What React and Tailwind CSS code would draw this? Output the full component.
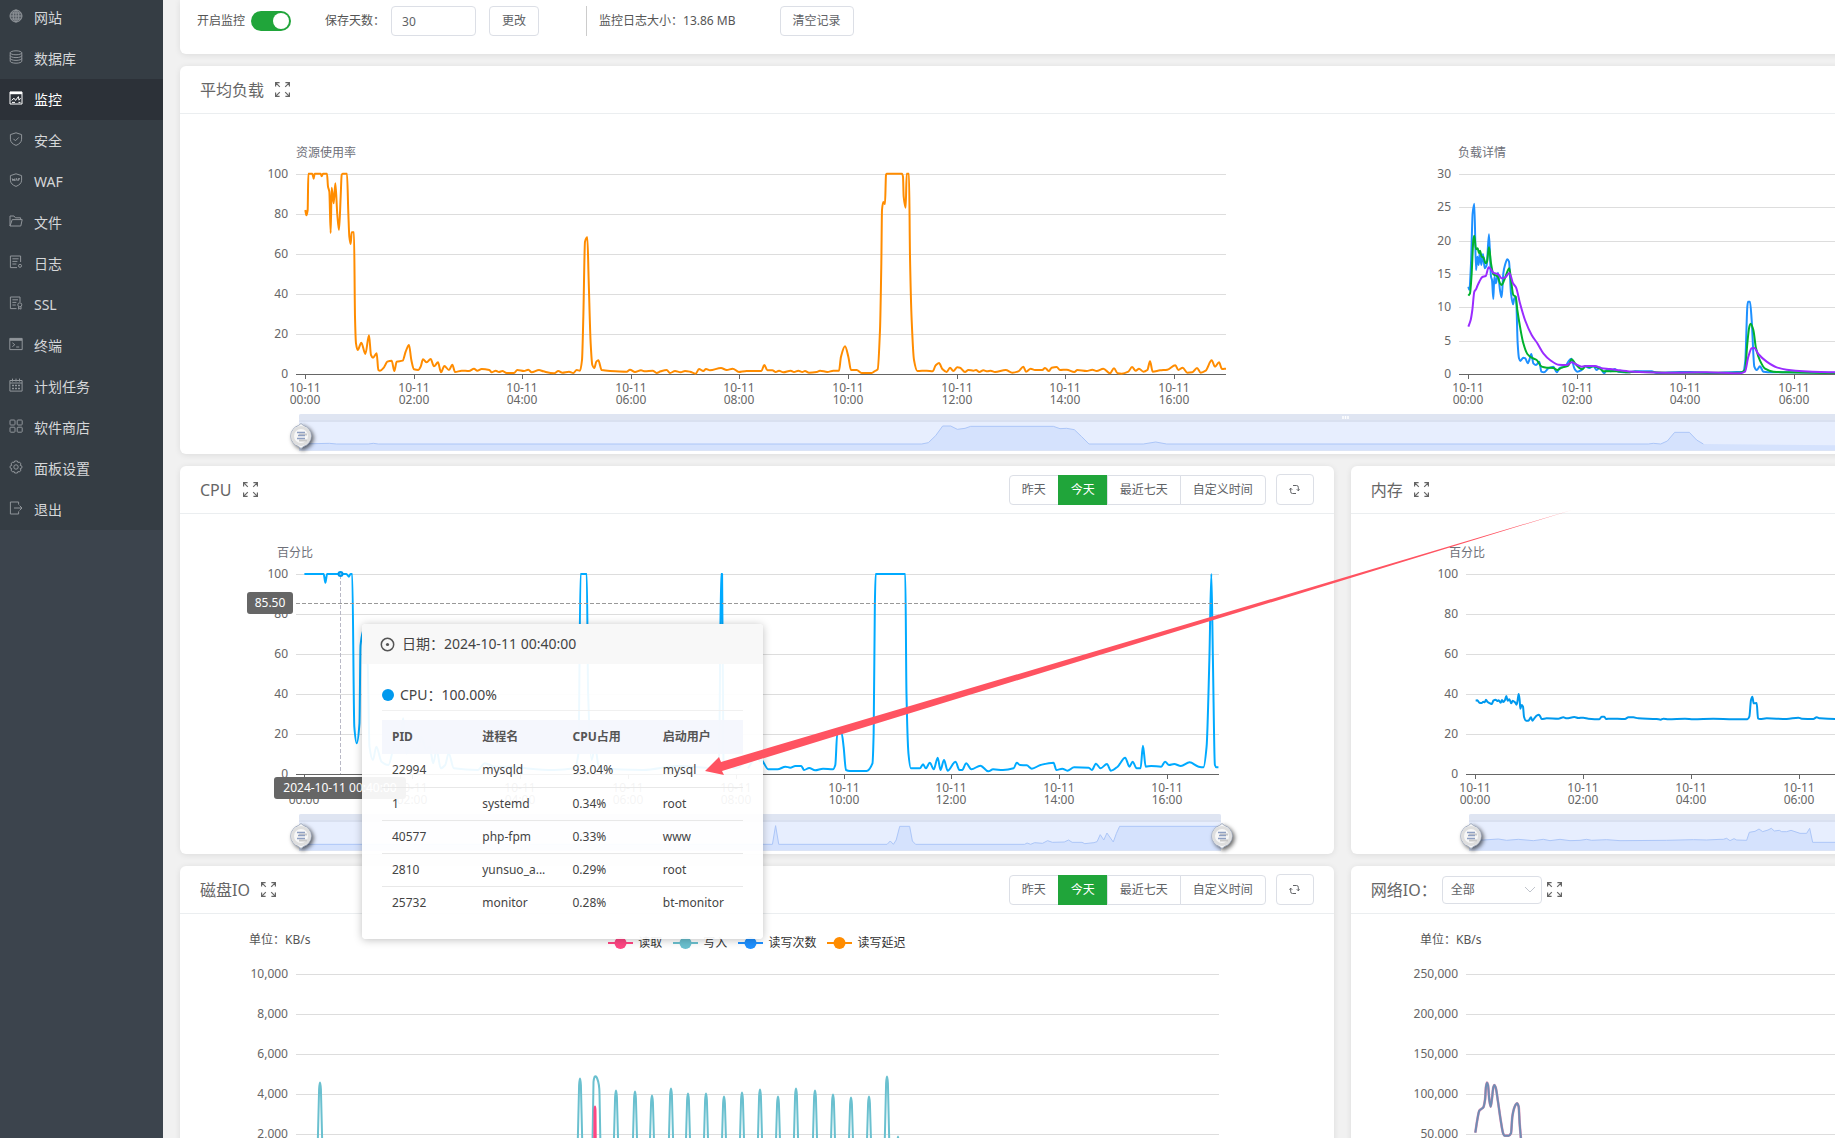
import { useState } from "react";

const menu = [
  { name: "网站", icon: "globe" },
  { name: "数据库", icon: "database" },
  { name: "监控", icon: "monitor" },
  { name: "安全", icon: "shield" },
  { name: "WAF", icon: "waf" },
  { name: "文件", icon: "folder" },
  { name: "日志", icon: "log" },
  { name: "SSL", icon: "ssl" },
  { name: "终端", icon: "terminal" },
  { name: "计划任务", icon: "calendar" },
  { name: "软件商店", icon: "store" },
  { name: "面板设置", icon: "gear" },
  { name: "退出", icon: "exit" },
];

const icons = {
  globe: (
    <>
      <circle cx="7" cy="7" r="6" fill="currentColor" fillOpacity="0.35" />
      <ellipse cx="7" cy="7" rx="2.8" ry="6" />
      <path d="M7 1v12M1 7h12M2 4h10M2 10h10" />
    </>
  ),
  database: (
    <>
      <ellipse cx="7" cy="2.8" rx="5.8" ry="2" />
      <path d="M1.2 2.8v8.4c0 1.1 2.6 2 5.8 2s5.8-.9 5.8-2V2.8" />
      <path d="M1.2 5.6c0 1.1 2.6 2 5.8 2s5.8-.9 5.8-2M1.2 8.4c0 1.1 2.6 2 5.8 2s5.8-.9 5.8-2" />
    </>
  ),
  monitor: (
    <>
      <path d="M1 1h12v12H1z" />
      <path d="M1 2h12" strokeWidth="2.4" />
      <path d="M2.6 9.4 5 7.2l1.6 2.2L9.4 5.6l.6 3.6 1.6-2M3 11.4h3M9.5 11.4h2" />
    </>
  ),
  shield: (
    <>
      <path d="M7 .8 12.6 2.6v4.6c0 3-2.4 5-5.6 6.2C3.8 12.2 1.4 10.2 1.4 7.2V2.6z" />
      <path d="m4.4 6.8 2 2 3.4-3.4" />
    </>
  ),
  waf: (
    <>
      <path d="M7 .8 12.6 2.6v4.6c0 3-2.4 5-5.6 6.2C3.8 12.2 1.4 10.2 1.4 7.2V2.6z" />
      <path d="m3.2 5.4.7 2.4.7-1.8.7 1.8.6-2.4M6.7 7.8l.8-2.4.8 2.4M9.3 7.8V5.5h1.6M9.3 6.6h1.2" />
    </>
  ),
  folder: <path d="M1 12V2h4l1.4 1.8h5.2V5.6M1 12l2.2-6.4h10L11.8 12z" />,
  log: (
    <>
      <path d="M8 12.6H1.4V1h10.2v6" />
      <path d="M3.4 3.8h6.2M3.4 6.4h5M3.4 9h4" />
      <circle cx="11" cy="10.8" r="1.5" />
    </>
  ),
  ssl: (
    <>
      <path d="M7.5 12.6H1.4V1H11v5" />
      <path d="M3.4 3.8H9M3.4 6.4h4M3.4 9h3.4" />
      <circle cx="10.8" cy="8.8" r="2" />
      <path d="M9.6 10.6v2.6l1.2-.8 1.2.8v-2.6" />
    </>
  ),
  terminal: (
    <>
      <path d="M.8 1.4h12.4v11.2H.8z" />
      <path d="M1 2.6h12" strokeWidth="2.4" />
      <path d="m3.4 5.8 2.4 1.9-2.4 1.9M7.2 10h3" />
    </>
  ),
  calendar: (
    <>
      <path d="M.9 2.5h12.2v10.6H.9zM1 5h12" />
      <path d="M3.500.6v3M7 .6v3M10.500.6v3" />
      <path d="M3 7.500h8M3 10.500h8" strokeWidth="1.400" strokeDasharray="2 1" />
    </>
  ),
  store: (
    <>
      <rect x="1" y="1" width="5" height="5" rx="0.8" />
      <rect x="8.2" y="1" width="5" height="5" rx="0.8" />
      <rect x="1" y="8.2" width="5" height="5" rx="0.8" />
      <rect x="8.2" y="8.2" width="5" height="5" rx="0.8" />
    </>
  ),
  gear: (
    <>
      <path d="M5.6 1h2.8l.5 1.5 1.5-.5L12 3.9l-.8 1.4 1.7.8v1.800l-1.700.8.8 1.400-1.600 1.900-1.500-.5-.5 1.500H5.600l-.5-1.500-1.500.5L2 10.100l.8-1.400-1.700-.8V6.100l1.700-.8L2 3.900 3.600 2l1.500.5z" />
      <circle cx="7" cy="7" r="2.2" />
    </>
  ),
  exit: (
    <>
      <path d="M9.6 3.6V1H1.4v12h8.2v-2.6" />
      <path d="M5 7h8M10.6 4.6 13 7l-2.4 2.4" />
    </>
  ),
};

const load1 =
  "196,240 199,256 203,240 205,131 217,131 221,146 224,131 242,131 245,139 249,131 261,131 264,170 268,185 272,309 275,173 281,220 286,160 292,255 297,300 302,200 305,135 308,131 321,131 325,250 328,320 332,342 335,307 342,307 345,560 348,640 353,660 364,638 376,672 387,616 393,675 399,683 410,670 415,720 420,722 432,712 442,695 455,692 463,723 470,695 488,692 497,665 507,645 514,690 522,718 535,720 542,710 549,688 560,697 572,687 582,709 594,697 603,727 613,708 627,720 637,704 645,726 665,722 687,723 702,716 712,722 725,717 748,720 755,727 767,722 777,726 787,723 800,729 822,729 832,720 852,723 865,719 875,727 897,720 910,724 942,730 955,723 967,728 987,725 1000,729 1010,720 1020,722 1026,690 1030,560 1035,335 1042,322 1046,450 1052,640 1057,705 1063,714 1069,695 1075,691 1085,720 1110,723 1160,725 1170,719 1185,726 1203,721 1215,724 1238,722 1250,729 1262,724 1280,720 1290,729 1305,723 1322,727 1335,723 1350,725 1367,731 1377,717 1390,723 1398,717 1410,721 1443,714 1460,720 1478,716 1497,726 1502,725";
const load2 =
  "0,726 20,723 64,723 73,705 82,721 97,721 107,726 117,722 130,727 152,722 162,726 175,722 187,726 195,723 207,728 230,726 240,722 262,726 280,722 297,722 303,680 315,649 325,680 333,720 350,720 365,729 395,729 405,723 413,718 420,600 424,400 426,240 430,216 435,222 438,135 440,131 486,131 489,140 491,200 497,233 500,131 507,131 510,380 515,570 522,690 532,723 560,722 578,724 587,706 597,699 607,717 620,726 630,713 640,723 652,712 660,713 675,726 685,720 700,722 708,720 718,726 730,721 742,724 752,722 765,726 797,720 817,728 835,724 850,710 858,725 872,716 885,720 907,720 915,714 927,723 935,713 950,711 960,720 980,719 1003,726 1012,720 1040,723 1057,719 1070,723 1090,716 1110,730 1122,715 1133,730 1145,731 1165,725 1176,711 1187,722 1197,716 1210,725 1222,720 1230,694 1238,725 1260,721 1282,719 1306,706 1315,720 1328,713 1342,728 1357,727 1371,714 1382,728 1397,722 1415,691 1425,710 1437,697 1446,717 1458,716";
const one =
  "385,470 388,480 393,400 398,250 403,221 408,420 412,380 416,405 419,370 424,405 429,372 434,415 440,405 447,313 453,440 456,450 460,507 463,440 468,460 474,428 480,480 485,502 490,430 495,405 502,388 507,395 513,490 519,523 523,505 528,500 533,640 537,685 541,693 550,683 556,685 563,700 568,690 574,672 580,700 588,705 598,695 604,725 612,727 625,715 640,710 650,727 660,713 675,710 685,695 694,686 703,715 712,725 725,720 735,709 748,714 760,708 770,720 780,712 792,730 800,720 812,724 825,717 835,725 865,727 885,724 935,724 950,729 1020,726 1050,726 1120,729 1190,726 1210,726 1216,690 1222,530 1224,515 1230,515 1235,570 1243,710 1250,720 1260,709 1270,725 1300,727 1485,728 1700,728";
const five =
  "385,497 390,490 395,430 400,330 403,317 408,358 413,355 417,370 420,362 425,380 430,382 437,400 441,395 447,352 453,400 460,432 473,440 480,460 485,465 492,452 500,430 508,415 513,450 520,495 527,500 532,540 540,590 550,640 562,672 575,683 590,690 605,710 620,713 640,714 652,720 665,713 685,707 695,688 705,700 717,713 727,718 737,708 745,711 760,709 780,716 790,724 830,724 865,727 885,725 1000,728 1200,728 1215,720 1222,640 1228,590 1232,581 1240,600 1248,655 1260,692 1275,716 1300,725 1340,727 1485,729 1700,729";
const fifteen =
  "385,590 392,570 397,540 403,485 408,478 412,468 418,455 427,441 437,438 446,412 452,417 460,428 475,433 485,445 495,443 508,429 513,440 519,460 528,472 540,520 555,570 575,615 592,640 610,670 630,690 655,704 680,705 695,697 710,704 725,710 740,708 765,708 785,715 810,717 840,721 880,725 1000,728 1100,727 1200,730 1215,725 1225,680 1235,655 1243,654 1255,672 1280,695 1310,712 1340,719 1390,724 1485,727 1700,728";
const cpu1 =
  "216,342 272,342 277,368 282,342 338,342 345,350 350,342 355,342 361,800 368,850 376,790 379,557 388,510 400,615 405,860 415,900 425,860 440,905 460,915 480,850 490,870 503,775 512,880 525,860 545,870 555,830 570,870 580,860 590,910 600,870 612,925 625,915 635,880 650,925 720,930 740,910 770,920 830,920 860,925 940,930 1000,925 1012,880 1018,342 1036,342 1040,700 1050,900 1060,860 1072,925 1200,930 1300,918 1420,925 1426,342 1429,342 1433,900 1470,925 1520,885 1540,905";
const cpu2 =
  "20,925 45,885 58,905 72,928 95,928 115,920 127,923 140,918 155,918 162,930 175,924 190,931 210,926 235,928 241,915 246,820 257,820 262,860 268,930 278,933 320,933 335,910 338,820 341,440 343,342 418,342 421,700 426,880 432,925 455,925 463,913 470,925 480,908 490,928 500,893 507,930 516,900 525,932 545,905 555,930 562,930 572,910 585,928 608,917 628,934 640,928 665,930 692,925 700,908 708,915 725,916 738,926 760,915 793,908 800,930 815,926 828,932 845,922 882,923 890,930 900,911 912,925 928,912 938,932 955,920 974,893 985,920 993,905 1003,925 1013,925 1019,857 1026,920 1040,918 1065,920 1075,905 1085,915 1098,912 1115,918 1137,907 1160,920 1172,922 1180,860 1187,600 1192,342 1196,600 1201,915 1205,922 1210,922";
const memory =
  "407,722 412,721 418,728 425,729 430,725 434,727 438,719 442,725 450,730 456,732 460,722 467,719 472,723 476,721 482,728 486,720 490,726 495,720 499,708 503,722 508,718 514,730 518,722 525,727 530,734 533,720 536,702 539,720 541,746 545,735 549,740 552,770 558,782 565,782 573,772 577,782 583,775 590,767 596,764 600,768 605,777 620,775 655,776 670,772 680,775 703,771 715,774 730,773 745,776 778,778 785,770 793,770 798,777 810,776 855,777 865,772 880,772 895,775 950,777 962,779 970,776 985,778 1035,776 1060,778 1120,776 1180,778 1222,778 1228,770 1233,720 1237,710 1241,730 1250,729 1254,775 1260,777 1280,775 1340,777 1375,773 1385,776 1420,777 1430,772 1440,775 1485,777 1700,777";
const network =
  "406,848 411,815 418,782 424,777 430,772 435,750 438,710 441,698 444,705 448,750 452,770 456,745 460,712 463,705 467,712 474,755 482,810 490,852 494,857 506,857 513,850 517,800 522,776 527,764 531,760 536,770 539,820 544,880 550,960";

const loadZoom =
  "0,942 230,942 268,940 290,942 385,942 400,940 415,942 1500,942 2045,942 2065,938 2087,917 2108,888 2132,888 2152,898 2175,895 2192,889 2440,889 2460,896 2480,895 2503,899 2525,920 2547,942 2710,942 2747,936 2780,942 4225,942 4240,940 4262,942 4282,933 4304,907 4348,907 4370,930 4390,942 6700,942";
const cpuZoom =
  "-1117,1153 58,1153 82,1153 90,1097 98,1153 372,1153 380,1143 388,1153 395,1140 404,1099 429,1099 436,1143 444,1153 720,1153 726,1149 735,1153 745,1148 765,1150 778,1142 790,1147 820,1146 831,1140 840,1147 865,1147 872,1151 895,1148 903,1145 911,1124 920,1140 928,1119 944,1146 952,1120 960,1099 1216,1099";
const memoryZoom =
  "388,1140 430,1140 475,1137 500,1141 535,1138 580,1142 610,1138 630,1142 660,1138 690,1142 720,1141 740,1138 755,1141 800,1139 840,1142 980,1141 1060,1139 1100,1140 1140,1138 1150,1138 1160,1135 1170,1142 1182,1136 1190,1140 1220,1141 1228,1117 1245,1114 1257,1107 1268,1115 1284,1110 1294,1105 1303,1113 1318,1111 1325,1115 1340,1115 1353,1111 1380,1120 1400,1120 1409,1105 1418,1147 1485,1147 3150,1147";

const writes = [
  [140, 167], [400, 163], [436, 175], [455, 176], [472, 180], [491, 173],
  [508, 178], [526, 178], [544, 181], [562, 177], [580, 174], [598, 181],
  [616, 173], [635, 175], [653, 179], [671, 182], [689, 181], [707, 161],
  [718, 221],
];

const processes = [
  { pid: "22994", name: "mysqld", cpu: "93.04%", user: "mysql" },
  { pid: "1", name: "systemd", cpu: "0.34%", user: "root" },
  { pid: "40577", name: "php-fpm", cpu: "0.33%", user: "www" },
  { pid: "2810", name: "yunsuo_a...", cpu: "0.29%", user: "root" },
  { pid: "25732", name: "monitor", cpu: "0.28%", user: "bt-monitor" },
];

const parse = (text, x, y, sx, sy) =>
  text.split(" ").map((pair) => {
    const [px, py] = pair.split(",").map(Number);
    return [x + px / sx, y + py / sy];
  });

// Monotone cubic path, so the curve never overshoots its samples
function smooth(pts) {
  const n = pts.length;
  const slope = [];
  for (let i = 0; i < n - 1; i++) {
    slope.push((pts[i + 1][1] - pts[i][1]) / (pts[i + 1][0] - pts[i][0]));
  }
  const m = pts.map((_, i) => {
    if (i === 0) return slope[0];
    if (i === n - 1) return slope[n - 2];
    const a = slope[i - 1];
    const b = slope[i];
    return a * b <= 0 ? 0 : (2 * a * b) / (a + b);
  });
  let d = `M${pts[0][0]} ${pts[0][1]}`;
  for (let i = 0; i < n - 1; i++) {
    const [x0, y0] = pts[i];
    const [x1, y1] = pts[i + 1];
    const h = (x1 - x0) / 3;
    d += `C${x0 + h} ${y0 + m[i] * h} ${x1 - h} ${y1 - m[i + 1] * h} ${x1} ${y1}`;
  }
  return d;
}

function Line({ data, x, y, sx = 3, sy = 3, color, width = 2 }) {
  return (
    <path
      d={smooth(parse(data, x, y, sx, sy))}
      fill="none"
      stroke={color}
      strokeWidth={width}
      strokeLinejoin="round"
    />
  );
}

function Chart({ name, nameX, nameY = 43, nameColor = "#6e7079", left, right, labels, first, step, ticks, children }) {
  const gap = 200 / (labels.length - 1);
  return (
    <svg className="block h-[300px] w-full overflow-hidden text-xs" role="img" aria-label={name}>
      <text x={nameX} y={nameY} fill={nameColor}>
        {name}
      </text>
      {labels.map((label, i) => {
        const y = Math.round(60 + gap * i);
        const last = label === "0";
        return (
          <g key={label}>
            <rect x={left} y={y} width={right - left} height="1" fill={last ? "#666666" : "#dddddd"} />
            <text x={left - 8} y={y + 4} textAnchor="end" fill="#666666">
              {label}
            </text>
          </g>
        );
      })}
      {ticks.map((t, i) => {
        const x = Math.round(first + step * i);
        return (
          <g key={t} fill="#666666" textAnchor="middle">
            <rect x={x} y="260" width="1" height="5" />
            <text x={x} y="278">10-11</text>
            <text x={x} y="290">{t}</text>
          </g>
        );
      })}
      {children}
    </svg>
  );
}

const hours = ["00:00", "02:00", "04:00", "06:00", "08:00", "10:00", "12:00", "14:00", "16:00"];
const percent = ["100", "80", "60", "40", "20", "0"];

function Handle({ x }) {
  return (
    <g transform={`translate(${x} 22)`}>
      <path
        d="M0-12.5 2.5-10.5A11 11 0 0 1 2.500 10.500L0 12.500-2.500 10.500A11 11 0 0 1-2.500-10.500Z"
        fill="#f7f7f7"
        stroke="#a3aec2"
        strokeWidth="1"
        className="drop-shadow-[2px_2px_2px_rgba(0,0,0,0.6)]"
      />
      <circle r="8.5" fill="none" stroke="#dedede" strokeWidth="3" />
      <path d="M-2-1.500h8M-2 4.500h8" stroke="#c9c9c9" strokeWidth="2" />
      <path d="M-4-3.500h8M-3-.5h7M-4 2.500h8" stroke="#8fa0c2" strokeWidth="1.500" />
    </g>
  );
}

function ZoomBar({ data, x, y, sx = 3, start, end, knobs, grip }) {
  const pts = parse(data, x, y, sx, 3).filter((p) => p[0] >= start - 30 && p[0] <= end + 1);
  pts[0][0] = start;
  const d = "M" + pts.map((p) => p.join(" ")).join("L");
  return (
    <svg className="block h-10 w-full overflow-visible" aria-hidden="true">
      <rect x={start} y="0" width={end - start} height="37" rx="2" fill="#e7eefe" />
      <rect x={start} y="0" width={end - start} height="7" rx="2" fill="#dfe5f2" />
      <rect x={start} y="6" width={end - start} height="2" fill="#d9e0f0" />
      <path d={`${d}L${end} 36L${start} 36Z`} fill="#d5e2fd" />
      <path d={d} fill="none" stroke="#acc6f8" />
      <rect x={start} y="36" width={end - start} height="1" fill="#dbe4f6" />
      {grip && <path d={`M${grip} 2v3M${grip + 2.5} 2v3M${grip + 5} 2v3`} stroke="#fff" strokeWidth="1.5" />}
      {knobs.map((k) => (
        <Handle key={k} x={k} />
      ))}
    </svg>
  );
}

function ExpandButton() {
  return (
    <button type="button" aria-label="全屏" className="text-[#666]">
      <svg width="15" height="15" viewBox="0 0 15 15" fill="none" stroke="currentColor" strokeWidth="1.2">
        <path d="M.6 4.6v-4h4M.6.6l4.200 4.200M10.400.6h4v4M14.400.6 10.200 4.800M.6 10.400v4h4M.6 14.400l4.200-4.200M14.400 10.400v4h-4M14.400 14.400l-4.200-4.200" />
      </svg>
    </button>
  );
}

function RangeButtons() {
  const [range, setRange] = useState("今天");
  return (
    <div className="ml-auto flex items-center gap-2.5 text-xs">
      <div className="flex">
        {["昨天", "今天", "最近七天", "自定义时间"].map((item) => (
          <button
            key={item}
            type="button"
            onClick={() => setRange(item)}
            className={`-ml-px h-[30px] border px-3 first:rounded-l last:rounded-r ${
              range === item
                ? "border-[#20a53a] bg-[#20a53a] text-white"
                : "border-[#dcdfe6] bg-white text-[#606266]"
            }`}
          >
            {item}
          </button>
        ))}
      </div>
      <button
        type="button"
        aria-label="刷新"
        className="flex h-[31px] w-[38px] items-center justify-center rounded border border-[#dcdfe6] text-[#606266]"
      >
        <svg width="11" height="11" viewBox="0 0 11 11" fill="none" stroke="currentColor" strokeWidth="1">
          <path d="M4 1.500h3.500a1.800 1.800 0 0 1 1.800 1.800v3.500M7 9.500H3.500a1.800 1.800 0 0 1-1.800-1.800V4.200M.2 5.700l1.500-1.500 1.500 1.500M7.800 5.300l1.500 1.500 1.500-1.500" />
        </svg>
      </button>
    </div>
  );
}

function Card({ title, tools, className = "", children }) {
  return (
    <section className={`rounded-md bg-white shadow-[0_1px_6px_rgba(0,0,0,0.09)] ${className}`}>
      <header className="flex h-12 items-center border-b border-[#ebeef0] px-5">
        {title}
        {tools}
      </header>
      {children}
    </section>
  );
}

function Title({ text }) {
  return (
    <div className="flex items-center gap-[11px]">
      <h2 className="text-base text-[#666]">{text}</h2>
      <ExpandButton />
    </div>
  );
}

function CpuTooltip() {
  return (
    <div className="absolute left-[182px] top-[110px] w-[401px] rounded bg-white/93 pb-5 text-[#444] shadow-[0_1px_8px_rgba(0,0,0,0.25)]">
      <div className="flex h-10 items-center gap-[7px] rounded-t bg-[#f8f8f8] px-[18px] text-sm">
        <svg width="15" height="15" viewBox="0 0 15 15" fill="none" stroke="#555" strokeWidth="1.5">
          <circle cx="7.5" cy="7.5" r="6.2" />
          <circle cx="7.5" cy="7.5" r="1.6" fill="#555" stroke="none" />
        </svg>
        <span>日期：2024-10-11 00:40:00</span>
      </div>
      <div className="px-5 pt-4">
        <div className="flex h-[31px] items-center gap-1.5 border-b border-[#f0f0f0] text-sm">
          <span className="size-3 rounded-full bg-[#0099ee]" />
          CPU：100.00%
        </div>
        <table className="mt-[9px] w-full table-fixed text-left text-xs">
          <thead>
            <tr className="h-[34px] bg-[#f4f6fd]/90 text-[#555]">
              <th className="pl-2.5 font-bold">PID</th>
              <th className="pl-2.5 font-bold">进程名</th>
              <th className="pl-2.5 font-bold">CPU占用</th>
              <th className="pl-2.5 font-bold">启动用户</th>
            </tr>
          </thead>
          <tbody>
            {processes.map((p) => (
              <tr key={p.pid} className="h-[33px] border-b border-[#e8e8e8] last:border-0">
                <td className="pl-2.5">{p.pid}</td>
                <td className="pl-2.5">{p.name}</td>
                <td className="pl-2.5">{p.cpu}</td>
                <td className="pl-2.5">{p.user}</td>
              </tr>
            ))}
          </tbody>
        </table>
      </div>
    </div>
  );
}

function Legend() {
  const items = [
    ["读取", "#ff4683"],
    ["写入", "#6ac0cf"],
    ["读写次数", "#1e90ff"],
    ["读写延迟", "#ff8c00"],
  ];
  return (
    <div className="flex h-[58px] items-center justify-center gap-[11px] text-xs text-[#333]">
      {items.map(([name, color]) => (
        <span key={name} className="flex items-center gap-[5px]">
          <svg width="25" height="14" aria-hidden="true">
            <rect y="6" width="25" height="2" fill={color} />
            <circle cx="12.5" cy="7" r="6" fill={color} />
          </svg>
          {name}
        </span>
      ))}
    </div>
  );
}

export default function App() {
  const [enabled, setEnabled] = useState(true);
  const [days, setDays] = useState("30");

  return (
    <div className="flex h-screen overflow-hidden bg-[#f1f1f1] font-['Noto_Sans','Noto_Sans_CJK_SC',sans-serif] text-[#555]">
      <aside className="w-[163px] shrink-0 bg-[#3c444d]">
        <nav className="-mt-[3px] bg-[#353d44]">
          {menu.map((item) => (
            <a
              key={item.name}
              href="#"
              className={`flex h-[41px] items-center gap-[11px] pl-[9px] text-sm ${
                item.icon === "monitor" ? "bg-[#2c3138] text-white" : "text-[#d5d7d9]"
              }`}
            >
              <svg
                width="14"
                height="14"
                viewBox="0 0 14 14"
                fill="none"
                stroke="currentColor"
                strokeWidth="1"
                className={`mb-1 ${item.icon === "monitor" ? "text-white" : "text-[#90959a]"}`}
              >
                {icons[item.icon]}
              </svg>
              {item.name}
            </a>
          ))}
        </nav>
      </aside>

      <main className="min-w-0 flex-1 overflow-hidden">
        <div className="grid w-[141%] grid-cols-2 gap-x-[17px] gap-y-3 pl-[17px] pr-4">
          {/* Settings bar */}
          <section className="col-span-2 flex h-[54px] items-start rounded-b-md bg-white px-[17px] pt-1.5 text-xs shadow-[0_1px_6px_rgba(0,0,0,0.09)]">
            <label className="flex h-[30px] items-center gap-1.5">
              开启监控
              <input
                type="checkbox"
                checked={enabled}
                onChange={(e) => setEnabled(e.target.checked)}
                className="relative h-5 w-10 appearance-none rounded-full bg-gray-300 before:absolute before:left-0.5 before:top-0.5 before:size-4 before:rounded-full before:bg-white checked:bg-[#20a53a] checked:before:left-[22px]"
              />
            </label>
            <label htmlFor="days" className="ml-[34px] leading-[30px]">
              保存天数：
            </label>
            <input
              id="days"
              value={days}
              onChange={(e) => setDays(e.target.value)}
              className="ml-1.5 h-[30px] w-[85px] rounded border border-[#dcdfe6] px-2.5 text-[#606266]"
            />
            <button type="button" className="ml-[13px] h-[30px] rounded border border-[#dcdfe6] px-3 text-[#606266]">
              更改
            </button>
            <div className="ml-[47px] h-[30px] w-px bg-[#ccc]" />
            <span className="ml-3 leading-[30px]">监控日志大小：13.86 MB</span>
            <button type="button" className="ml-11 h-[30px] rounded border border-[#dcdfe6] px-3 text-[#606266]">
              清空记录
            </button>
          </section>

          <Card className="col-span-2" title={<Title text="平均负载" />}>
            <div className="grid grid-cols-2">
              <Chart name="资源使用率" nameX={116} left={116} right={1046} labels={percent} first={125} step={108.6} ticks={hours}>
                <Line data={load1} x={60} y={16} color="#ff8c00" />
                <Line data={load2} x={560} y={16} color="#ff8c00" />
              </Chart>
              <Chart
                name="负载详情"
                nameX={116}
                left={117}
                right={1046}
                labels={["30", "25", "20", "15", "10", "5", "0"]}
                first={126}
                step={108.6}
                ticks={hours}
              >
                <Line data={one} x={-2} y={16} color="#1e90ff" />
                <Line data={five} x={-2} y={16} color="#00b22d" />
                <Line data={fifteen} x={-2} y={16} color="#9a2cff" />
              </Chart>
            </div>
            <ZoomBar data={loadZoom} x={60} y={-284} start={119} end={2210} knobs={[121, 2210]} grip={1163} />
          </Card>

          <Card className="relative z-10" title={<Title text="CPU" />} tools={<RangeButtons />}>
            <div className="relative">
              <Chart name="百分比" nameX={97} left={116} right={1039} labels={percent} first={124} step={107.9} ticks={hours}>
                <Line data={cpu1} x={50} y={-54} sx={2.904} color="#00aaff" />
                <Line data={cpu2} x={560} y={-54} sx={2.529} color="#00aaff" />
                <path d="M160.5 61v199" stroke="#b9b9c6" strokeDasharray="4 2" />
                <path d="M116 89.5h923" stroke="#999" strokeDasharray="4 2" />
                <circle cx="160.5" cy="60" r="2" fill="#7cc8f5" stroke="#0099ee" strokeWidth="2" />
                <rect x="67" y="78" width="46" height="22" rx="3" fill="#666" />
                <text x="90" y="93" fill="#fff" textAnchor="middle">
                  85.50
                </text>
                <rect x="94" y="263" width="132" height="22" rx="3" fill="#666" />
                <text x="160" y="278" fill="#fff" textAnchor="middle">
                  2024-10-11 00:40:00
                </text>
              </Chart>
              <ZoomBar data={cpuZoom} x={560} y={-354} sx={2.529} start={119} end={1041} knobs={[121, 1042]} />
              <CpuTooltip />
              <svg className="pointer-events-none absolute inset-0 size-full overflow-visible" aria-hidden="true">
                <path d="M525 257 539 243 541 248 1392-4 542 257 544 261Z" fill="#ff5361" />
              </svg>
            </div>
          </Card>

          <Card title={<Title text="内存" />}>
            <Chart name="百分比" nameX={98} left={115} right={1039} labels={percent} first={124} step={108} ticks={hours}>
              <Line data={memory} x={-11} y={-54} color="#0099ee" />
            </Chart>
            <ZoomBar data={memoryZoom} x={-11} y={-354} start={118} end={1041} knobs={[120, 1041]} />
          </Card>

          <Card title={<Title text="磁盘IO" />} tools={<RangeButtons />}>
            <div className="relative">
              <Chart
                name="单位：KB/s"
                nameX={69}
                nameY={30}
                nameColor="#555555"
                left={116}
                right={1039}
                labels={["10,000", "8,000", "6,000", "4,000", "2,000", "0"]}
                first={124}
                step={107.9}
                ticks={hours}
              >
                {writes.map(([x, top]) => (
                  <path
                    key={x}
                    d={`M${x - 3} 260L${x - 0.9} ${top + 8}Q${x} ${top - 5} ${x + 0.9} ${top + 8}L${x + 3} 260`}
                    fill="none"
                    stroke="#6ac0cf"
                    strokeWidth="2"
                  />
                ))}
                <path
                  d="M412 260 413.5 168Q414.5 159 417 164 419.5 170 419.5 180L421 260"
                  fill="none"
                  stroke="#6ac0cf"
                  strokeWidth="2"
                />
                <path d="M414 260 414.5 196Q415 189 415.5 196L416 260" fill="#ff4683" stroke="#ff4683" strokeWidth="2" />
              </Chart>
              <div className="absolute inset-x-0 top-0">
                <Legend />
              </div>
            </div>
          </Card>

          <Card
            title={
              <div className="flex items-center">
                <label htmlFor="nic" className="text-base text-[#666]">
                  网络IO：
                </label>
                <div className="relative mx-[5px]">
                  <select
                    id="nic"
                    className="block h-7 w-[100px] appearance-none rounded border border-[#dcdfe6] bg-white px-2 text-xs text-[#606266]"
                  >
                    <option>全部</option>
                  </select>
                  <svg
                    className="pointer-events-none absolute right-1.5 top-2.5"
                    width="12"
                    height="8"
                    fill="none"
                    stroke="#c0c4cc"
                    aria-hidden="true"
                  >
                    <path d="m1 1 5 5 5-5" />
                  </svg>
                </div>
                <ExpandButton />
              </div>
            }
          >
            <Chart
              name="单位：KB/s"
              nameX={69}
              nameY={30}
              nameColor="#555555"
              left={115}
              right={1039}
              labels={["250,000", "200,000", "150,000", "100,000", "50,000", "0"]}
              first={124}
              step={108}
              ticks={hours}
            >
              <Line data={network} x={-11} y={-64} color="#e58fb4" width={2.6} />
              <Line data={network} x={-11} y={-64} color="#6f8db3" />
            </Chart>
          </Card>
        </div>
      </main>
    </div>
  );
}
